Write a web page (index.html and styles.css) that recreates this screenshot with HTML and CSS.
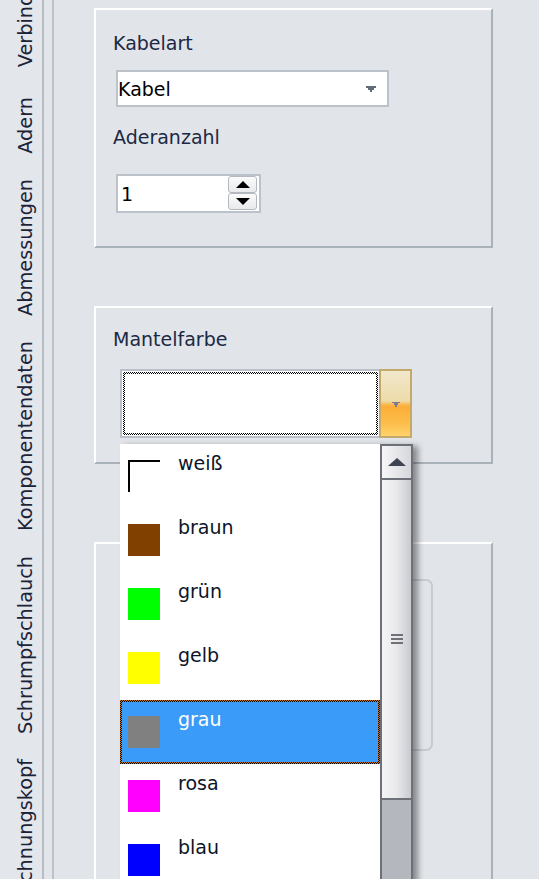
FILE: index.html
```html
<!DOCTYPE html>
<html lang="de">
<head>
<meta charset="utf-8">
<title>Adern</title>
<link rel="stylesheet" href="styles.css">
</head>
<body>
<div class="app">
  <nav class="tabs">
    <div class="tab-list">
      <div class="tab tab-first"><span>Verbindungen</span></div>
      <div class="tab"><span>Adern</span></div>
      <div class="tab"><span>Abmessungen</span></div>
      <div class="tab"><span>Komponentendaten</span></div>
      <div class="tab"><span>Schrumpfschlauch</span></div>
      <div class="tab"><span>Zeichnungskopf</span></div>
    </div>
  </nav>
  <div class="splitter"></div>
  <main class="content">
    <section class="panel panel-cable">
      <div class="label">Kabelart</div>
      <div class="combo">
        <span class="combo-text">Kabel</span>
        <svg class="combo-arrow" width="10" height="6" viewBox="0 0 10 6"><polygon points="0,0 10,0 10,2 8,2 8,4 6,4 6,6 4,6 4,4 2,4 2,2 0,2" fill="#646b78"/></svg>
      </div>
      <div class="label label-gap">Aderanzahl</div>
      <div class="spin">
        <span class="spin-text">1</span>
        <div class="spin-buttons">
          <div class="spin-btn"><svg width="14" height="7" viewBox="0 0 14 7"><polygon points="7,0 14,7 0,7" fill="#000"/></svg></div>
          <div class="spin-btn"><svg width="14" height="7" viewBox="0 0 14 7"><polygon points="0,0 14,0 7,7" fill="#000"/></svg></div>
        </div>
      </div>
    </section>

    <section class="panel panel-mantel">
      <div class="label">Mantelfarbe</div>
      <div class="combo2">
        <div class="field-wrap"><div class="field"></div></div>
        <div class="drop-btn">
          <svg width="8" height="5" viewBox="0 0 8 5"><polygon points="0,0 8,0 8,1 6,1 6,3 5,3 5,5 3,5 3,3 2,3 2,1 0,1" fill="#7c7c8c"/></svg>
        </div>
      </div>
    </section>

    <section class="panel panel-third">
      <div class="inner-box"></div>
    </section>
  </main>

  <div class="dropdown">
    <ul class="list">
      <li class="item"><span class="swatch swatch-white"></span><span class="item-label">weiß</span></li>
      <li class="item"><span class="swatch" style="background:#804000"></span><span class="item-label">braun</span></li>
      <li class="item"><span class="swatch" style="background:#00ff00"></span><span class="item-label">grün</span></li>
      <li class="item"><span class="swatch" style="background:#ffff00"></span><span class="item-label">gelb</span></li>
      <li class="item item-selected"><span class="swatch" style="background:#808080"></span><span class="item-label">grau</span></li>
      <li class="item"><span class="swatch" style="background:#ff00ff"></span><span class="item-label">rosa</span></li>
      <li class="item"><span class="swatch" style="background:#0000ff"></span><span class="item-label">blau</span></li>
    </ul>
    <div class="scrollbar">
      <div class="sb-up"><svg width="18" height="8" viewBox="0 0 18 8"><polygon points="9,0 18,8 0,8" fill="#3e4452"/></svg></div>
      <div class="sb-thumb"><span class="grip"></span><span class="grip"></span><span class="grip"></span></div>
      <div class="sb-track"></div>
    </div>
  </div>
</div>
</body>
</html>
```

FILE: styles.css
```css
* { box-sizing: border-box; }

html, body {
  margin: 0;
  padding: 0;
  width: 539px;
  height: 879px;
  overflow: hidden;
  background: #e1e4e8;
}

body {
  font-family: "DejaVu Sans", Verdana, sans-serif;
  font-size: 19px;
  color: #1c2944;
}

.app {
  position: relative;
  display: flex;
  width: 539px;
  height: 879px;
  overflow: hidden;
}

/* vertical tab strip */
.tabs {
  width: 44px;
  flex: none;
  height: 879px;
  overflow: hidden;
  background: #e3e6ea;
  border-right: 2px solid #b6bdc5;
}

.tab-list {
  display: flex;
  flex-direction: column;
  align-items: flex-start;
  margin-top: -79px;
}

.tab {
  padding: 12px 0 13px 15px;
}

.tab-first {
  padding-bottom: 18px;
}

.tab span {
  display: block;
  writing-mode: vertical-rl;
  transform: rotate(180deg);
  line-height: 22px;
  width: 22px;
  height: max-content;
  white-space: nowrap;
  font-size: 19.3px;
  color: #1b2338;
}

.splitter {
  width: 10px;
  flex: none;
  background: #e2e5e9;
  border-right: 2px solid #bcc2c9;
}

.content {
  flex: 1;
  padding: 8px 0 0 40px;
}

.panel {
  width: 399px;
  border-top: 2px solid #ffffff;
  border-left: 2px solid #ffffff;
  border-right: 2px solid #a9b1b9;
  border-bottom: 2px solid #a9b1b9;
  padding-left: 17px;
}

.label {
  line-height: 22px;
  height: 22px;
}

.panel-cable {
  height: 240px;
  padding-top: 22px;
}

.combo {
  margin-top: 16px;
  margin-left: 3px;
  width: 273px;
  height: 37px;
  border: 2px solid #bbc2ca;
  background: #fff;
  display: flex;
  align-items: center;
  justify-content: space-between;
  padding: 0 11px 0 0;
}

.combo-text,
.spin-text {
  line-height: 22px;
  color: #000;
}

.label-gap {
  margin-top: 19px;
}

.spin {
  margin-top: 26px;
  margin-left: 3px;
  width: 145px;
  height: 39px;
  border: 2px solid #bbc2ca;
  background: #fff;
  display: flex;
  align-items: center;
  justify-content: space-between;
  padding: 0 2px 0 3px;
}

.spin-buttons {
  display: flex;
  flex-direction: column;
  align-self: stretch;
  padding-bottom: 1px;
}

.spin-btn {
  width: 29px;
  flex: 1;
  border: 1px solid #b4b9bf;
  border-radius: 3px;
  background: linear-gradient(#fbfbfb, #e9eaec);
  display: flex;
  align-items: center;
  justify-content: center;
}

.panel-mantel {
  margin-top: 58px;
  height: 158px;
  padding-top: 20px;
}

.combo2 {
  margin-top: 19px;
  margin-left: 7px;
  width: 292px;
  height: 69px;
  display: flex;
}

.field-wrap {
  flex: 1;
  border: 2px solid #b9c0c8;
  border-right: none;
  background: #fff;
  padding: 1px;
}

.field {
  height: 100%;
  border: 2px solid transparent;
  background:
    linear-gradient(#fff, #fff) padding-box,
    repeating-conic-gradient(#000 0 25%, #fff 0 50%) 0 0 / 2px 2px border-box;
}

.drop-btn {
  width: 33px;
  border: 2px solid #c5a96a;
  background: linear-gradient(#f1e7cc 0%, #eddba9 46%, #f6c46a 50%, #fbae38 54%, #fdbd4a 80%, #ffd36c 100%);
  display: flex;
  align-items: center;
  justify-content: center;
  padding-top: 2px;
}

.panel-third {
  margin-top: 78px;
  height: 400px;
  border-bottom: none;
  padding-top: 35px;
}

.inner-box {
  margin-left: 12px;
  width: 308px;
  height: 172px;
  border: 2px solid #c6cbd1;
  border-radius: 7px;
}

/* open dropdown list */
.dropdown {
  position: absolute;
  left: 120px;
  top: 444px;
  width: 293px;
  height: 440px;
  display: flex;
  background: #fff;
  box-shadow: 5px 2px 6px rgba(0, 0, 0, 0.4);
}

.list {
  list-style: none;
  margin: 0;
  padding: 0;
  width: 260px;
  flex: none;
}

.item {
  height: 64px;
  display: flex;
  align-items: flex-start;
  color: #0c1428;
}

.swatch {
  width: 32px;
  height: 32px;
  flex: none;
  margin: 16px 0 0 8px;
}

.swatch-white {
  border-top: 2px solid #000;
  border-left: 2px solid #000;
}

.item-label {
  line-height: 22px;
  margin: 8px 0 0 18px;
}

.item-selected {
  border: 2px solid transparent;
  background:
    linear-gradient(#3b9bf8, #3b9bf8) padding-box,
    repeating-conic-gradient(#000 0 25%, #d07a1c 0 50%) 0 0 / 2px 2px border-box;
  color: #fff;
}

.item-selected .swatch {
  margin: 14px 0 0 6px;
}

.item-selected .item-label {
  margin-top: 6px;
}

.scrollbar {
  width: 33px;
  flex: none;
  display: flex;
  flex-direction: column;
  border-left: 2px solid #6d7177;
  border-right: 2px solid #6d7177;
}

.sb-up {
  height: 36px;
  flex: none;
  border-top: 2px solid #6d7177;
  border-bottom: 2px solid #6d7177;
  background: linear-gradient(90deg, #f7f7f8, #d6d7db);
  display: flex;
  align-items: center;
  justify-content: center;
}

.sb-thumb {
  height: 320px;
  flex: none;
  border-bottom: 2px solid #6d7177;
  background: linear-gradient(90deg, #f4f4f6 0%, #e9e9ec 50%, #c9cacf 100%);
  display: flex;
  flex-direction: column;
  align-items: center;
  justify-content: center;
  gap: 2px;
}

.grip {
  display: block;
  width: 12px;
  height: 2px;
  background: #707176;
}

.sb-track {
  flex: 1;
  background: #b4b7be;
}
```
